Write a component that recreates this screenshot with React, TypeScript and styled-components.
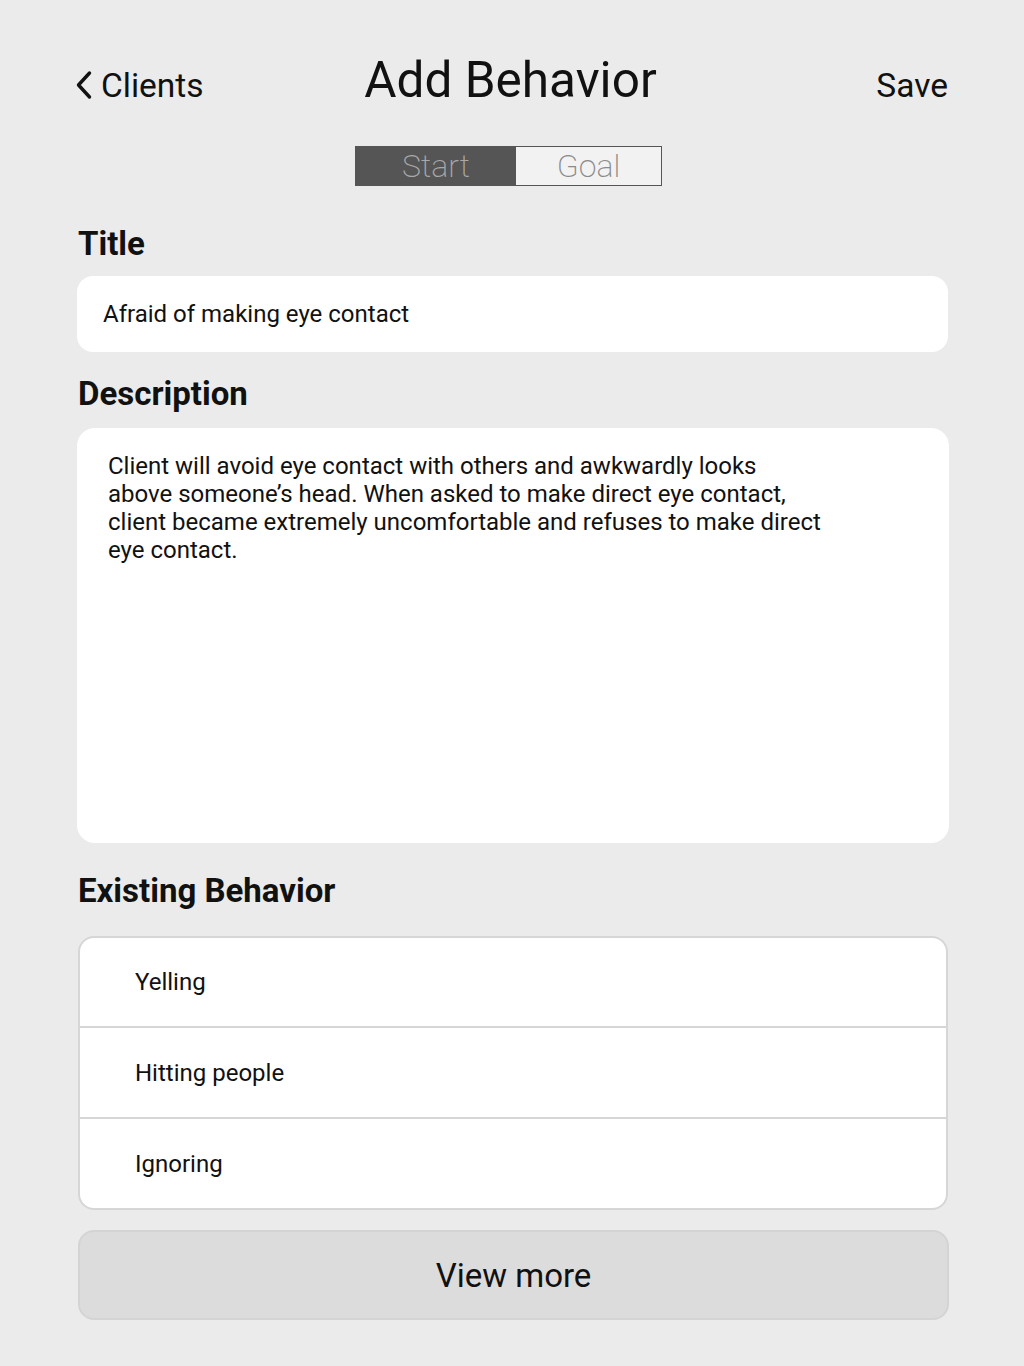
import styled, { createGlobalStyle } from 'styled-components';

const GlobalStyle = createGlobalStyle`
  html, body {
    margin: 0;
    padding: 0;
    background: #ebebeb;
    font-family: Roboto, "Liberation Sans", Arial, sans-serif;
    color: #111;
  }
  * { box-sizing: border-box; }
`;

const StyledPage = styled.div`
  display: flex;
  flex-direction: column;
  width: 1024px;
  min-height: 1366px;
  padding: 50px 76px 40px 77px;
`;

const StyledHeader = styled.div`
  display: grid;
  grid-template-columns: 1fr auto 1fr;
  align-items: center;
  height: 60px;
`;

const StyledBack = styled.div`
  display: flex;
  align-items: center;
  gap: 7px;
  font-size: 33.5px;
  margin-top: 10px;
  margin-left: -3px;
`;

const StyledHeading = styled.div`
  font-size: 49.5px;
  text-align: center;
  margin-left: -4px;
`;

const StyledSave = styled.div`
  font-size: 33.5px;
  text-align: right;
  margin-top: 10px;
`;

const StyledSegments = styled.div`
  display: flex;
  align-self: center;
  margin: 36px 0 0 -8px;
  border: 1px solid #555;
`;

const StyledSegment = styled.div<{ active?: boolean; w: number }>`
  width: ${(p) => p.w}px;
  height: 38px;
  display: flex;
  align-items: center;
  justify-content: center;
  font-size: 32px;
  font-weight: 200;
  background: ${(p) => (p.active ? '#555555' : '#f2f2f2')};
  color: ${(p) => (p.active ? '#a9a9a9' : '#8a8a8a')};
`;

const StyledLabel = styled.div<{ top: number; bottom: number }>`
  font-size: 33px;
  font-weight: 700;
  line-height: 40px;
  margin: ${(p) => `${p.top}px 0 ${p.bottom}px 1px`};
`;

const StyledInput = styled.div`
  background: #fff;
  border-radius: 16px;
  height: 76px;
  display: flex;
  align-items: center;
  padding-left: 26px;
  font-size: 24px;
`;

const StyledTextArea = styled.div`
  background: #fff;
  border-radius: 18px;
  height: 415px;
  margin-right: -1px;
  padding: 24px 60px 0 31px;
  font-size: 24px;
  line-height: 28px;
`;

const StyledList = styled.div`
  background: #fff;
  border: 2px solid #d6d6d6;
  border-radius: 16px;
  margin-left: 1px;
  overflow: hidden;
`;

const StyledRow = styled.div`
  height: 88px;
  display: flex;
  align-items: center;
  padding-left: 55px;
  font-size: 24px;
  & + & {
    border-top: 2px solid #d6d6d6;
    height: 91px;
  }
`;

const StyledButton = styled.div`
  margin: 20px -1px 0 1px;
  height: 90px;
  background: #dcdcdc;
  border: 2px solid #d4d4d4;
  border-radius: 16px;
  display: flex;
  align-items: center;
  justify-content: center;
  font-size: 33px;
`;

const Chevron = () => (
  <svg width="20" height="32" viewBox="0 0 20 32" fill="none">
    <path d="M15.5 4 L4.5 16 L15.5 28" stroke="#111" strokeWidth="3.4" strokeLinecap="round" strokeLinejoin="round" />
  </svg>
);

const behaviors = ['Yelling', 'Hitting people', 'Ignoring'];

const descriptionLines = [
  'Client will avoid eye contact with others and awkwardly looks',
  'above someone’s head. When asked to make direct eye contact,',
  'client became extremely uncomfortable and refuses to make direct',
  'eye contact.',
];

const App = () => {
  return (
    <>
      <GlobalStyle />
      <StyledPage>
        <StyledHeader>
          <StyledBack>
            <Chevron />
            Clients
          </StyledBack>
          <StyledHeading>Add Behavior</StyledHeading>
          <StyledSave>Save</StyledSave>
        </StyledHeader>

        <StyledSegments>
          <StyledSegment active w={160}>Start</StyledSegment>
          <StyledSegment w={145}>Goal</StyledSegment>
        </StyledSegments>

        <StyledLabel top={38} bottom={12}>Title</StyledLabel>
        <StyledInput>Afraid of making eye contact</StyledInput>

        <StyledLabel top={22} bottom={14}>Description</StyledLabel>
        <StyledTextArea>
          {descriptionLines.map((line, i) => (
            <div key={i}>{line}</div>
          ))}
        </StyledTextArea>

        <StyledLabel top={28} bottom={25}>Existing Behavior</StyledLabel>
        <StyledList>
          {behaviors.map((b) => (
            <StyledRow key={b}>{b}</StyledRow>
          ))}
        </StyledList>

        <StyledButton>View more</StyledButton>
      </StyledPage>
    </>
  );
};

export default App;
